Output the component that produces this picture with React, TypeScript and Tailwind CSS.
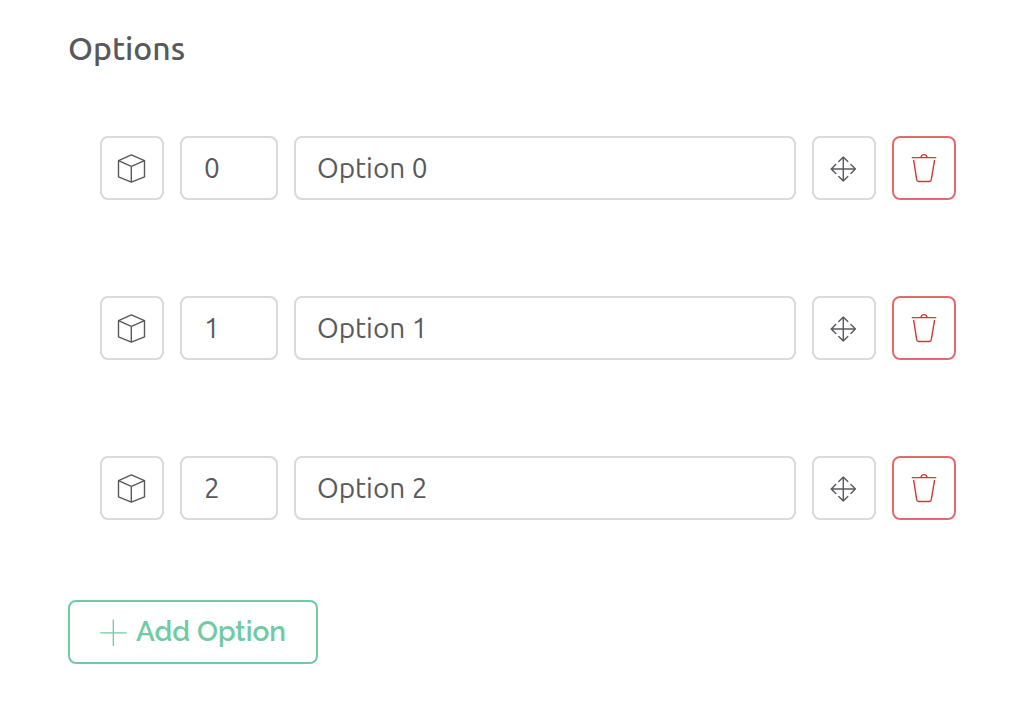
import { useState } from "react";

function CubeIcon() {
  return (
    <svg aria-hidden="true" className="size-8" viewBox="0 0 32 32" fill="none" stroke="currentColor" strokeWidth="1.4" strokeLinejoin="round">
      <path d="M15.3 2.9 28.5 8.6V24.9L15.3 30.2 2.5 24.9V8.6Z M2.5 8.6 15.3 14.4 28.5 8.6 M15.3 14.4V30.2" />
    </svg>
  );
}

function MoveIcon() {
  return (
    <svg aria-hidden="true" className="size-8" viewBox="0 0 32 32" fill="none" stroke="currentColor" strokeWidth="1.4" strokeLinecap="round" strokeLinejoin="round">
      <path d="M15.3 5V29M3.3 17H27.3M10.8 9.4 15.3 4.9 19.8 9.4M10.8 24.6 15.3 29.1 19.8 24.6M7.7 12.5 3.2 17 7.7 21.5M22.9 12.5 27.4 17 22.9 21.5" />
    </svg>
  );
}

function TrashIcon() {
  return (
    <svg aria-hidden="true" className="size-8" viewBox="0 0 32 32" fill="none" stroke="currentColor" strokeWidth="1.4" strokeLinecap="round" strokeLinejoin="round">
      <path d="M4.3 5.6H27.7M13.1 5.4C13.1 3.6 14.3 2.6 16 2.6S18.9 3.6 18.9 5.4M5.7 8.5 8.7 27.7Q9 29.5 10.6 29.5H21.4Q23 29.5 23.3 27.7L26.5 8.5" />
    </svg>
  );
}

function PlusIcon() {
  return (
    <svg aria-hidden="true" className="size-7" viewBox="0 0 28 28" fill="none" stroke="currentColor" strokeWidth="1.3" strokeLinecap="round">
      <path d="M13.3 2V27.4M0.7 14.9H26.2" />
    </svg>
  );
}

const iconButton = "flex size-16 shrink-0 items-center justify-center rounded-lg border-2 bg-white";
const field = "h-16 rounded-lg border-2 border-[#d9d9d9] bg-white pb-0.5 text-[28px] outline-none focus:border-[#6fcba3]";

export default function App() {
  const [options, setOptions] = useState([
    { id: 0, value: "0", label: "Option 0" },
    { id: 1, value: "1", label: "Option 1" },
    { id: 2, value: "2", label: "Option 2" },
  ]);

  const update = (id: number, key: "value" | "label", text: string) =>
    setOptions(options.map((o) => (o.id === id ? { ...o, [key]: text } : o)));

  const add = () => {
    const id = options.reduce((max, o) => Math.max(max, o.id), -1) + 1;
    setOptions([...options, { id, value: String(id), label: `Option ${id}` }]);
  };

  return (
    <main className="bg-white pt-6 pr-[74px] pb-10 pl-[68px] font-['Ubuntu','Noto_Sans',sans-serif] text-[#58595d]">
      <h1 className="text-[32px] leading-12 font-medium">Options</h1>
      <ul className="mt-16 flex flex-col gap-24 pl-8">
        {options.map((o) => (
          <li key={o.id} className="flex gap-4">
            <button type="button" aria-label="Option type" className={`${iconButton} border-[#d9d9d9]`}>
              <CubeIcon />
            </button>
            <input
              aria-label="Value"
              className={`${field} w-[98px] px-[22px]`}
              value={o.value}
              onChange={(e) => update(o.id, "value", e.target.value)}
            />
            <input
              aria-label="Label"
              className={`${field} min-w-0 flex-1 px-[21px]`}
              value={o.label}
              onChange={(e) => update(o.id, "label", e.target.value)}
            />
            <button type="button" aria-label="Move option" className={`${iconButton} border-[#d9d9d9]`}>
              <MoveIcon />
            </button>
            <button
              type="button"
              aria-label="Delete option"
              className={`${iconButton} border-[#e06c6e] text-[#d43535]`}
              onClick={() => setOptions(options.filter((x) => x.id !== o.id))}
            >
              <TrashIcon />
            </button>
          </li>
        ))}
      </ul>
      <button
        type="button"
        onClick={add}
        className="mt-20 flex h-16 items-center gap-2 rounded-lg border-2 border-[#6fcba3] bg-white px-[30px] font-['Raleway','Lato',sans-serif] text-[28px] font-semibold text-[#6fcba3]"
      >
        <PlusIcon />
        Add Option
      </button>
    </main>
  );
}
